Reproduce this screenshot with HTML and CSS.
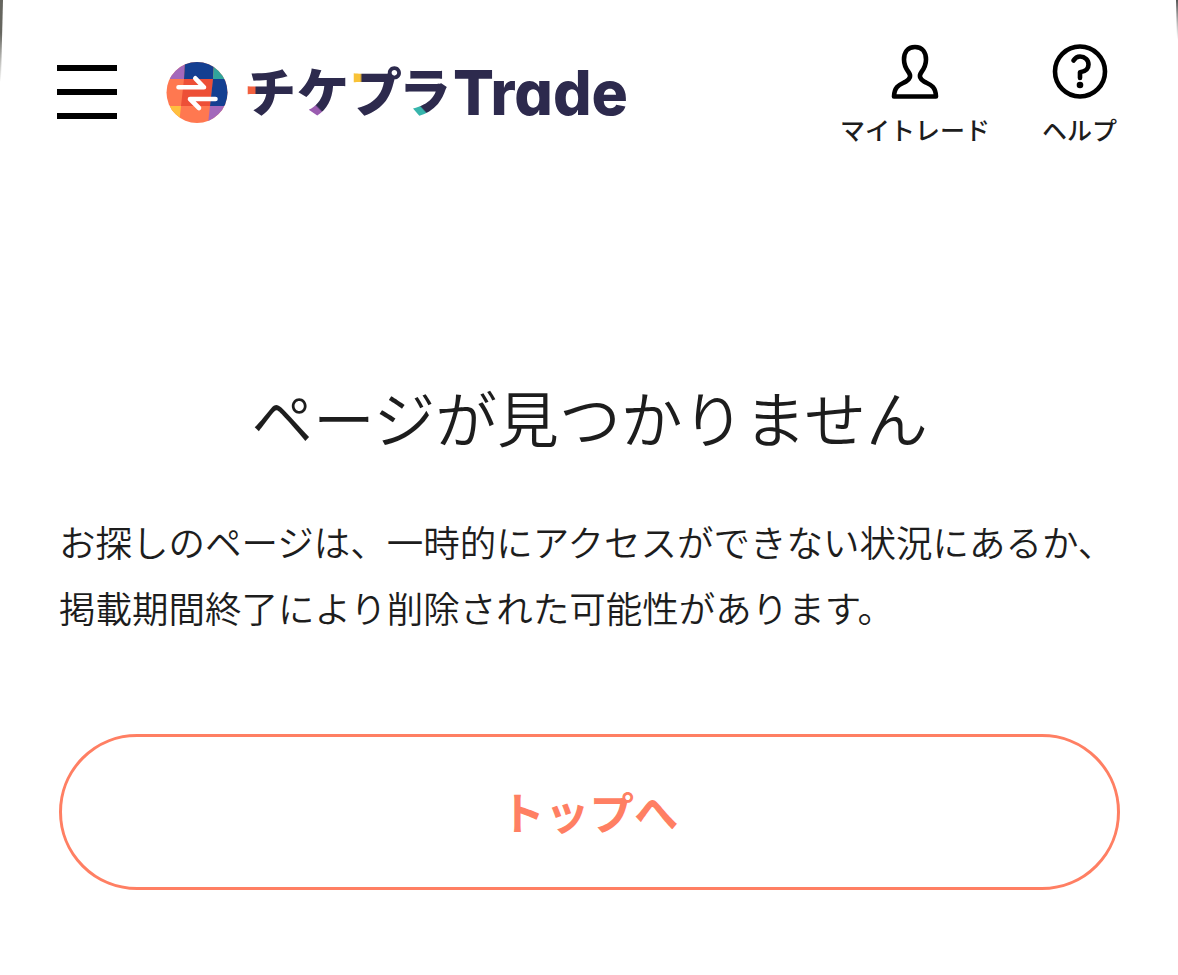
FILE: index.html
```html
<!DOCTYPE html>
<html lang="ja">
<head>
  <meta charset="UTF-8" />
  <meta name="viewport" content="width=device-width, initial-scale=1.0"/>
  <title>ページが見つかりません | チケプラTrade</title>
  <link rel="stylesheet" href="styles.css">
</head>
<body>
  <!-- Header -->
  <header class="header">
    <button class="menu-btn" type="button" aria-label="メニュー">
      <span class="menu-line"></span>
      <span class="menu-line"></span>
      <span class="menu-line"></span>
    </button>

    <a class="logo" href="#">
      <svg width="480" height="116" viewBox="160 35 480 116">
        <defs>
          <clipPath id="ball"><circle cx="197" cy="92.5" r="30.5"/></clipPath>
          <!-- letter fills: navy with one coloured stroke end -->
          <pattern id="chi" patternUnits="userSpaceOnUse" x="-10" y="-60" width="80" height="80">
            <rect width="80" height="80" fill="#2d2a4d"/>
            <rect x="8" y="31" width="13.500" height="13" fill="#f2603f"/>
          </pattern>
          <pattern id="ke" patternUnits="userSpaceOnUse" x="-10" y="-60" width="80" height="80">
            <rect width="80" height="80" fill="#2d2a4d"/>
            <path d="M14 52L25 50L37 62V70H14Z" fill="#9a5cb0"/>
          </pattern>
          <pattern id="pu" patternUnits="userSpaceOnUse" x="-10" y="-60" width="80" height="80">
            <rect width="80" height="80" fill="#2d2a4d"/>
            <rect x="8" y="14" width="14" height="18" fill="#f8c237"/>
          </pattern>
          <pattern id="ra" patternUnits="userSpaceOnUse" x="-10" y="-60" width="80" height="80">
            <rect width="80" height="80" fill="#2d2a4d"/>
            <path d="M14 52L27 50L38 62V70H14Z" fill="#37b5ac"/>
          </pattern>
        </defs>
        <g clip-path="url(#ball)">
          <rect x="166" y="62" width="62" height="62" fill="#ff7850"/>
          <path d="M166 62H185L184 79H166Z" fill="#a368bb"/>
          <path d="M185 62H214L213 79H184Z" fill="#143f91"/>
          <path d="M214 62H228V79H213Z" fill="#31a59c"/>
          <path d="M184 79H213L210 106H181Z" fill="#ed4f37"/>
          <path d="M213 79H228V106H210Z" fill="#143f91"/>
          <path d="M166 106H181L179 124H166Z" fill="#ffc03f"/>
          <path d="M210 106H228V124H208Z" fill="#a368bb"/>
        </g>
        <path class="logo-arrow" d="M178.500 87.300H204L195.300 78.300M215.500 99H190L199 108"/>
        <g class="logo-kana">
          <text transform="translate(244 111.500)" fill="url(#chi)">チ</text>
          <text transform="translate(297 111.500)" fill="url(#ke)">ケ</text>
          <text transform="translate(349 111.500) scale(1.020 1)" fill="url(#pu)">プ</text>
          <text transform="translate(399 111.500)" fill="url(#ra)">ラ</text>
        </g>
        <text class="logo-latin" x="453" y="115" textLength="175" lengthAdjust="spacingAndGlyphs">Trade</text>
      </svg>
    </a>

    <nav class="nav">
      <a class="nav-item" href="#">
        <svg width="50" height="58" viewBox="0 0 50 58">
          <path class="icon-line" d="M25 4C17.500 4 14 9.500 14 16.500C14 22 15.500 25 18.500 29C21.500 33 20 36 16 38.500C11 41.500 4.500 42 4 53.500H46C45.500 42 39 41.500 34 38.500C30 36 28.500 33 31.500 29C34.500 25 36 22 36 16.500C36 9.500 32.500 4 25 4Z"/>
        </svg>
        <span>マイトレード</span>
      </a>
      <a class="nav-item" href="#">
        <svg width="58" height="58" viewBox="-1 0 58 58">
          <circle class="icon-line" cx="29" cy="28.500" r="25"/>
          <path class="icon-line" d="M22.500 17.500C24 15 26 13.500 29 13.500C34 13.500 37.500 17 37.500 21.500C37.500 26 34.500 28.500 29 29.300V35"/>
          <circle cx="29" cy="42" r="3.300"/>
        </svg>
        <span>ヘルプ</span>
      </a>
    </nav>
  </header>

  <!-- Not found message -->
  <main class="content">
    <h1>ページが見つかりません</h1>
    <p>お探しのページは、一時的にアクセスができない状況にあるか、<br>掲載期間終了により削除された可能性があります。</p>
    <a class="top-btn" href="#">トップへ</a>
  </main>
</body>
</html>
```
FILE: styles.css
```css
* {
  box-sizing: border-box;
}

body {
  margin: 0;
  min-height: 975px;
  background-color: #fff;
  color: #1d1d1d;
  font-family: "Noto Sans CJK JP", sans-serif;
}

/* dark slivers at the rounded sheet corners */
body::before,
body::after {
  content: "";
  position: absolute;
  top: 0;
  left: 0;
  width: 3px;
  height: 82px;
  background: linear-gradient(#66665f 40%, #fff);
  clip-path: polygon(0 0, 100% 0, 30% 100%, 0 100%);
}

body::after {
  left: auto;
  right: 0;
  width: 2px;
  height: 40px;
  background: linear-gradient(#555, #fff);
  clip-path: polygon(0 0, 100% 0, 100% 100%, 50% 100%);
}

a {
  color: inherit;
  text-decoration: none;
}

.header {
  display: flex;
  align-items: flex-start;
  height: 160px;
  padding: 0 61px 0 57px;
}

.menu-btn {
  display: flex;
  flex-direction: column;
  gap: 18px;
  width: 60px;
  margin-top: 65px;
  padding: 0;
  border: none;
  background: none;
}

.menu-line {
  height: 6px;
  background-color: #000;
}

.logo {
  margin: 35px 0 0 43px;
}

.logo svg,
.nav-item svg {
  display: block;
}

.logo-arrow {
  fill: none;
  stroke: #fff;
  stroke-width: 4.6;
  stroke-linecap: round;
  stroke-linejoin: round;
}

.logo-kana {
  font-size: 52px;
  font-weight: 900;
}

.logo-latin {
  fill: #2d2a4d;
  font-family: Inter, sans-serif;
  font-size: 62px;
  font-weight: 800;
  font-feature-settings: "cv11";
}

.nav {
  display: flex;
  gap: 52px;
  margin: 43px 0 0 auto;
}

.nav-item {
  display: flex;
  flex-direction: column;
  align-items: center;
  gap: 12px;
  font-size: 25px;
  font-weight: 500;
  line-height: 32px;
}

.icon-line {
  fill: none;
  stroke: #000;
  stroke-width: 4.6;
  stroke-linejoin: round;
  stroke-linecap: round;
}

.content {
  padding: 206px 58px 0 59px;
}

h1 {
  margin: 0;
  font-size: 61.8px;
  font-weight: 350;
  line-height: 100px;
  text-align: center;
  white-space: nowrap;
}

p {
  margin: 43px 0 93px;
  font-size: 36.5px;
  font-weight: 350;
  line-height: 66px;
  white-space: nowrap;
}

.top-btn {
  display: flex;
  align-items: center;
  justify-content: center;
  height: 156px;
  padding-bottom: 3px;
  border: 3px solid #ff7f63;
  border-radius: 78px;
  color: #ff7f63;
  font-size: 44.5px;
  font-weight: 700;
}
```
